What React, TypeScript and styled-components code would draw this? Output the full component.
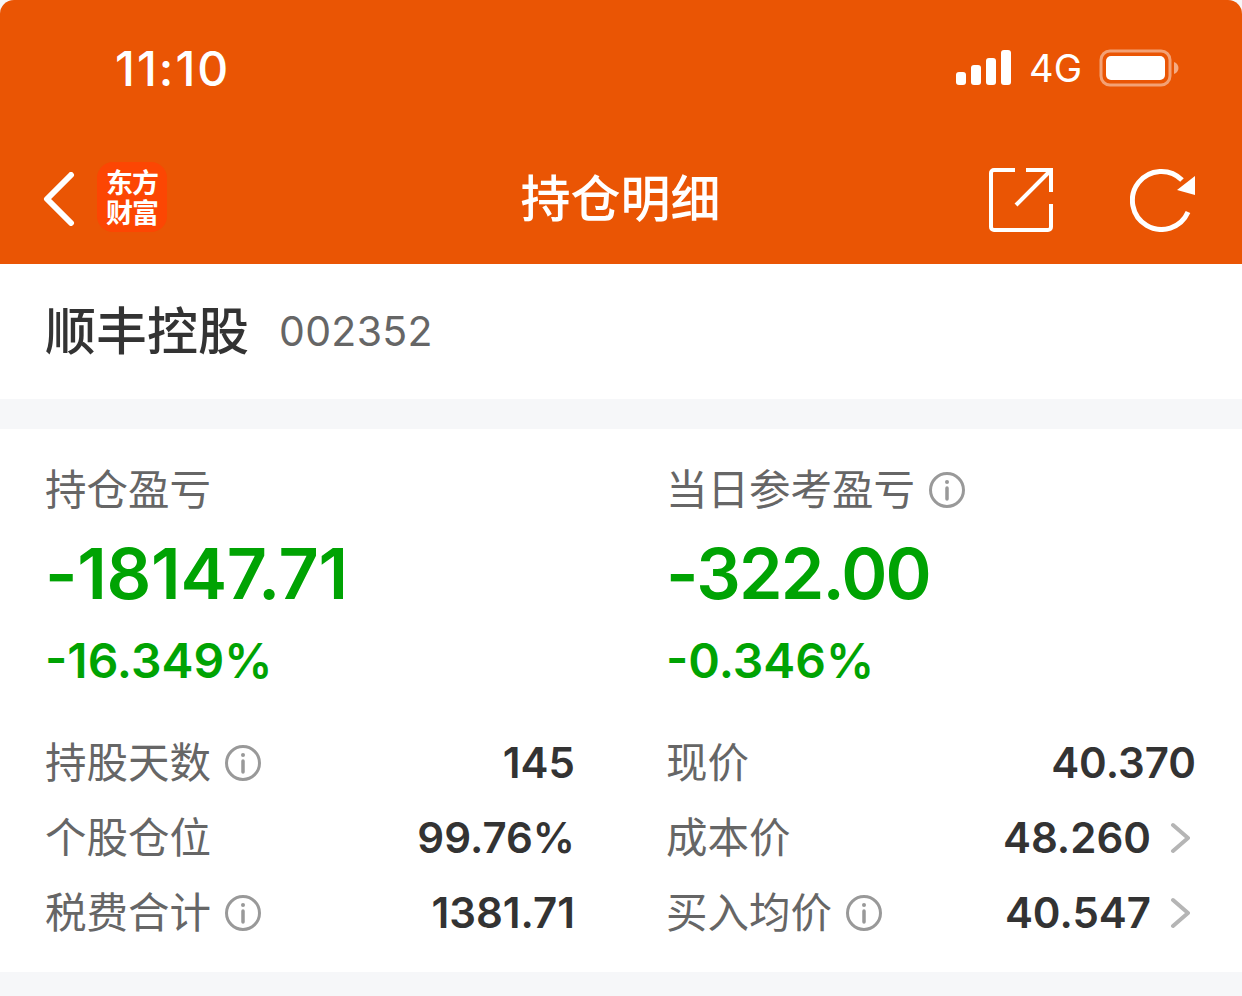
import styled, { createGlobalStyle } from 'styled-components';

const FONT = `Inter, 'Noto Sans CJK SC', sans-serif`;

const GlobalStyle = createGlobalStyle`
  html, body {
    margin: 0;
    padding: 0;
    background: #fff;
  }
  body {
    font-family: ${FONT};
  }
`;

const Page = styled.div`
  width: 1242px;
  height: 996px;
  overflow: hidden;
  background: #f6f7f9;
`;

const Header = styled.header`
  height: 264px;
  box-sizing: border-box;
  background: #ea5504;
  border-radius: 14px 14px 0 0;
  display: flex;
  flex-direction: column;
  color: #fff;
`;

const StatusBar = styled.div`
  height: 136px;
  box-sizing: border-box;
  padding: 0 63px 0 115px;
  display: flex;
  justify-content: space-between;
  align-items: center;
`;

const Time = styled.span`
  font-size: 48px;
  font-weight: 500;
  letter-spacing: 2px;
`;

const StatusRight = styled.div`
  display: flex;
  align-items: center;
  gap: 17px;
`;

const Network = styled.span`
  font-size: 38px;
  font-weight: 400;
  line-height: 1;
`;

const NavBar = styled.nav`
  flex: 1;
  padding: 0 46px 0 43px;
  display: flex;
  align-items: center;
  justify-content: space-between;
  margin-top: -6px;
`;

const NavLeft = styled.div`
  width: 300px;
  display: flex;
  align-items: center;
  gap: 22px;
`;

const BackButton = styled.span`
  display: flex;
  padding-top: 3px;
`;

const Logo = styled.div`
  flex: none;
  width: 70px;
  height: 70px;
  border-radius: 16px;
  background: #fc4603;
  display: flex;
  align-items: center;
  justify-content: center;
  text-align: center;
  font-family: 'Noto Sans CJK SC', sans-serif;
  font-size: 27px;
  font-weight: 700;
  line-height: 30px;
  letter-spacing: -1px;
`;

const Title = styled.h1`
  margin: 0 0 0 2px;
  padding-bottom: 4px;
  font-size: 50px;
  font-weight: 500;
  font-family: 'Noto Sans CJK SC', sans-serif;
`;

const NavRight = styled.div`
  width: 300px;
  padding-top: 5px;
  display: flex;
  justify-content: flex-end;
  align-items: center;
  gap: 77px;
`;

const StockRow = styled.section`
  height: 135px;
  box-sizing: border-box;
  padding: 0 45px;
  background: #fff;
  display: flex;
  align-items: center;
  gap: 30px;
`;

const StockName = styled.strong`
  padding-bottom: 8px;
  font-family: 'Noto Sans CJK SC', sans-serif;
  font-size: 51px;
  font-weight: 500;
  color: #333;
`;

const StockCode = styled.span`
  padding-bottom: 2px;
  font-size: 41px;
  color: #666;
  letter-spacing: 0.3px;
`;

const Card = styled.section`
  margin-top: 30px;
  height: 543px;
  box-sizing: border-box;
  padding: 29px 46px 0 45px;
  background: #fff;
  display: grid;
  grid-template-columns: 530px 530px;
  column-gap: 91px;
  align-content: start;
`;

const Summary = styled.div`
  display: flex;
  flex-direction: column;
  height: 267px;
`;

const Label = styled.div`
  display: flex;
  align-items: center;
  gap: 14px;
  line-height: 58px;
  white-space: nowrap;
`;

const LabelText = styled.span`
  padding-bottom: 6px;
  font-family: 'Noto Sans CJK SC', sans-serif;
  font-size: 41.5px;
  color: #666;
`;

const BigValue = styled.div<{ $spacing: number }>`
  margin-top: 9px;
  font-size: 70px;
  line-height: 86px;
  font-weight: 600;
  color: #00a303;
  letter-spacing: ${({ $spacing }) => $spacing}px;
`;

const Percent = styled.div`
  margin-top: 15px;
  font-size: 48px;
  line-height: 58px;
  font-weight: 600;
  color: #00a303;
`;

const Rows = styled.div`
  display: flex;
  flex-direction: column;
`;

const Row = styled.div`
  height: 75px;
  display: flex;
  align-items: center;
  justify-content: space-between;
`;

const RowValue = styled.div`
  display: flex;
  align-items: center;
  gap: 19px;
  font-size: 42px;
  font-weight: 600;
  color: #333;
`;

const Chevron = styled.svg`
  margin-right: 6px;
`;

function SignalIcon() {
  return (
    <svg width="56" height="36" viewBox="0 0 56 36" fill="#fff">
      <rect x="0" y="22" width="10" height="13" rx="3" />
      <rect x="15" y="15" width="10" height="20" rx="3" />
      <rect x="30" y="8" width="10" height="27" rx="3" />
      <rect x="45" y="0" width="10" height="35" rx="3" />
    </svg>
  );
}

function BatteryIcon() {
  return (
    <svg width="80" height="38" viewBox="0 0 80 38">
      <rect x="2" y="2" width="69" height="34" rx="9" fill="none" stroke="#fff" strokeOpacity="0.45" strokeWidth="3" />
      <rect x="7" y="7" width="59" height="24" rx="5" fill="#fff" />
      <path d="M75 13c3 1 4.500 3.500 4.500 6s-1.500 5-4.500 6z" fill="#fff" fillOpacity="0.5" />
    </svg>
  );
}

function BackIcon() {
  return (
    <svg width="32" height="54" viewBox="0 0 32 54" fill="none" stroke="#fff" strokeWidth="6" strokeLinecap="round" strokeLinejoin="round">
      <path d="M28 3 4 27l24 24" />
    </svg>
  );
}

function ShareIcon() {
  return (
    <svg width="64" height="64" viewBox="0 0 64 64" fill="none" stroke="#fff" strokeWidth="4">
      <path d="M26 2H5a3 3 0 0 0-3 3v54a3 3 0 0 0 3 3h54a3 3 0 0 0 3-3V36" />
      <path d="M62 24V2H37" />
      <path d="M61 3 27 37" />
    </svg>
  );
}

function RefreshIcon() {
  return (
    <svg width="66" height="64" viewBox="0 0 66 64">
      <path d="M52 12A29 29 0 1 0 58 44" fill="none" stroke="#fff" strokeWidth="5" />
      <path d="M65 8v19L47 22z" fill="#fff" />
    </svg>
  );
}

function InfoIcon() {
  return (
    <svg width="36" height="36" viewBox="0 0 36 36" fill="none" stroke="#999" strokeWidth="3">
      <circle cx="18" cy="18" r="16.500" />
      <path d="M18 16v11" strokeLinecap="round" strokeWidth="3.500" />
      <circle cx="18" cy="10" r="2" fill="#999" stroke="none" />
    </svg>
  );
}

function ChevronIcon() {
  return (
    <Chevron width="20" height="32" viewBox="0 0 20 32" fill="none" stroke="#b5b5b5" strokeWidth="4" strokeLinecap="round" strokeLinejoin="round">
      <path d="M3 3l15 13L3 29" />
    </Chevron>
  );
}

interface StatRow {
  label: string;
  value: string;
  info?: boolean;
  arrow?: boolean;
}

const LEFT_ROWS: StatRow[] = [
  { label: '持股天数', value: '145', info: true },
  { label: '个股仓位', value: '99.76%' },
  { label: '税费合计', value: '1381.71', info: true }
];

const RIGHT_ROWS: StatRow[] = [
  { label: '现价', value: '40.370' },
  { label: '成本价', value: '48.260', arrow: true },
  { label: '买入均价', value: '40.547', info: true, arrow: true }
];

function StatRows({ rows }: { rows: StatRow[] }) {
  return (
    <Rows>
      {rows.map(row => (
        <Row key={row.label}>
          <Label>
            <LabelText>{row.label}</LabelText>
            {row.info && <InfoIcon />}
          </Label>
          <RowValue>
            {row.value}
            {row.arrow && <ChevronIcon />}
          </RowValue>
        </Row>
      ))}
    </Rows>
  );
}

function App() {
  return (
    <Page>
      <GlobalStyle />
      <Header>
        <StatusBar>
          <Time>11:10</Time>
          <StatusRight>
            <SignalIcon />
            <Network>4G</Network>
            <BatteryIcon />
          </StatusRight>
        </StatusBar>
        <NavBar>
          <NavLeft>
            <BackButton>
              <BackIcon />
            </BackButton>
            <Logo>
              东方
              <br />
              财富
            </Logo>
          </NavLeft>
          <Title>持仓明细</Title>
          <NavRight>
            <ShareIcon />
            <RefreshIcon />
          </NavRight>
        </NavBar>
      </Header>
      <StockRow>
        <StockName>顺丰控股</StockName>
        <StockCode>002352</StockCode>
      </StockRow>
      <Card>
        <Summary>
          <Label>
            <LabelText>持仓盈亏</LabelText>
          </Label>
          <BigValue $spacing={-0.3}>-18147.71</BigValue>
          <Percent>-16.349%</Percent>
        </Summary>
        <Summary>
          <Label>
            <LabelText>当日参考盈亏</LabelText>
            <InfoIcon />
          </Label>
          <BigValue $spacing={-1.8}>-322.00</BigValue>
          <Percent>-0.346%</Percent>
        </Summary>
        <StatRows rows={LEFT_ROWS} />
        <StatRows rows={RIGHT_ROWS} />
      </Card>
    </Page>
  );
}

export default App;
